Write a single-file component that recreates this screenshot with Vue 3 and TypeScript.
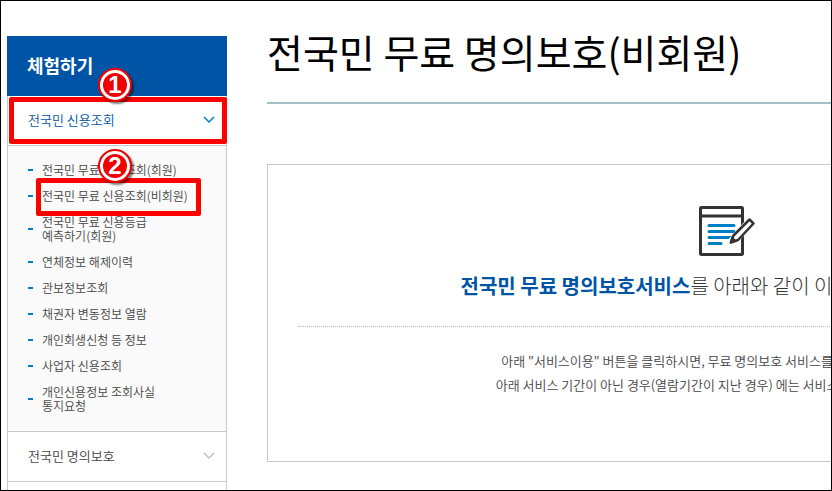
<script setup lang="ts">
interface Marker {
  label: string
  kind: string
}

const links: string[] = [
  '전국민 무료 신용조회(회원)',
  '전국민 무료 신용조회(비회원)',
  '전국민 무료 신용등급\n예측하기(회원)',
  '연체정보 해제이력',
  '관보정보조회',
  '채권자 변동정보 열람',
  '개인회생신청 등 정보',
  '사업자 신용조회',
  '개인신용정보 조회사실\n통지요청',
]

const markers: Marker[] = [
  { label: '1', kind: 'first' },
  { label: '2', kind: 'second' },
]
</script>

<template>
  <div class="frame">
    <div class="page">
      <nav class="side">
        <h2 class="side-title">체험하기</h2>
        <div class="side-body">
          <button class="group active" type="button" aria-expanded="true">
            <span>전국민 신용조회</span>
            <svg class="chevron" viewBox="0 0 12 8"><path d="M1 1L6 6L11 1" /></svg>
          </button>
          <ul class="links">
            <li v-for="link in links" :key="link"><a href="#">{{ link }}</a></li>
          </ul>
          <button class="group" type="button" aria-expanded="false">
            <span>전국민 명의보호</span>
            <svg class="chevron" viewBox="0 0 12 8"><path d="M1 1L6 6L11 1" /></svg>
          </button>
        </div>
        <div class="outline outline-first"></div>
        <div class="outline outline-second"></div>
        <span v-for="m in markers" :key="m.label" class="marker" :class="m.kind">
          <span class="disc">{{ m.label }}</span>
        </span>
      </nav>

      <main class="main">
        <h1>전국민 무료 명의보호(비회원)</h1>
        <section class="panel">
          <svg class="note" viewBox="0 0 58 52">
            <rect class="ink" x="2.500" y="2.500" width="42" height="47" rx="1" />
            <path class="ink" d="M2.500 11H44.500" />
            <path class="lines" d="M11 20.500H36M11 26.500H36M11 32.500H33M11 38.500H23" />
            <path class="halo" d="M34 37L53 16" />
            <path class="pen" d="M51.500 14.500L55.500 18.500L40 35L33 37.500L35.500 30.500Z" />
            <path class="tip" d="M31.500 38.500L33.500 31L39 36Z" />
          </svg>
          <p class="lead"><strong>전국민 무료 명의보호서비스</strong>를 아래와 같이 이용하실 수 있습니다.</p>
          <p class="text">
            아래 "서비스이용" 버튼을 클릭하시면, 무료 명의보호 서비스를 이용하실 수 있습니다.<br />
            아래 서비스 기간이 아닌 경우(열람기간이 지난 경우) 에는 서비스를 이용할 수 없습니다.
          </p>
        </section>
      </main>
    </div>
  </div>
</template>

<style>
body {
  margin: 0;
  background: #fff;
}
</style>

<style scoped>
.frame {
  box-sizing: border-box;
  height: 100vh;
  overflow: hidden;
  border: 1px solid #000;
  font-family: 'Noto Sans CJK KR', sans-serif;
  color: #444;
}

.page {
  display: flex;
  gap: 40px;
  box-sizing: border-box;
  min-width: 1186px;
  min-height: 100%;
  padding-left: 6px;
}

.side {
  position: relative;
  display: flex;
  flex-direction: column;
  flex: 0 0 220px;
  margin-top: 35px;
}

.side-title {
  margin: 0;
  padding-left: 20px;
  background: #0054a6;
  color: #fff;
  font-size: 18px;
  font-weight: 700;
  line-height: 58px;
  padding-bottom: 2px;
}

.side-body {
  flex: 1;
  border: solid #c8c8c8;
  border-width: 0 1px;
}

.group {
  display: flex;
  align-items: center;
  justify-content: space-between;
  box-sizing: border-box;
  width: 100%;
  height: 50px;
  padding: 0 11px 2px 20px;
  border: 0;
  border-bottom: 1px solid #c8c8c8;
  background: #fff;
  color: #444;
  font: 350 13px 'Noto Sans CJK KR', sans-serif;
}

.active {
  color: #0054a6;
}

.chevron {
  width: 12px;
  height: 8px;
  fill: none;
  stroke: #c0c0c0;
  stroke-width: 1.5;
}

.active .chevron {
  stroke: #0080c4;
}

.links {
  display: grid;
  gap: 12px;
  margin: 0;
  padding: 17px 0 18px 20px;
  border-bottom: 1px solid #c8c8c8;
  background: #fafafa;
  list-style: none;
  font-size: 12px;
  font-weight: 350;
  line-height: 14px;
}

.links li {
  display: flex;
  align-items: center;
  gap: 9px;
}

.links li::before {
  content: '';
  width: 5px;
  height: 2px;
  background: #0080c4;
}

.links a {
  color: #444;
  text-decoration: none;
  white-space: pre-line;
}

.outline {
  position: absolute;
  box-sizing: border-box;
  border: 5px solid #f00;
  border-radius: 2px;
  pointer-events: none;
}

.outline-first {
  top: 61px;
  left: 2px;
  right: 0;
  height: 47px;
}

.outline-second {
  top: 142px;
  left: 29px;
  width: 165px;
  height: 38px;
}

.marker {
  position: absolute;
  left: 91px;
  box-sizing: border-box;
  width: 34px;
  height: 34px;
  padding: 3px;
  border: 2px solid #f00000;
  border-radius: 50%;
  background: #fff;
  box-shadow: 2px 2px 2px rgba(0, 0, 0, 0.5);
}

.first {
  top: 32px;
}

.second {
  top: 113px;
}

.disc {
  display: block;
  border-radius: 50%;
  background: #f00000;
  color: #fff;
  font: bold 24px/24px 'Liberation Sans', sans-serif;
  text-align: center;
}

.main {
  flex: 1;
}

h1 {
  margin: 21px 0 0;
  padding-bottom: 22px;
  border-bottom: 2px solid #9fbfc9;
  color: #000;
  font-size: 39px;
  font-weight: 400;
  line-height: 58px;
}

.panel {
  margin-top: 60px;
  padding: 40px 30px 64px;
  border: 1px solid #c8c8c8;
  text-align: center;
}

.note {
  display: block;
  width: 58px;
  height: 52px;
  margin: 0 auto;
}

.ink {
  fill: none;
  stroke: #333;
  stroke-width: 3;
}

.lines {
  fill: none;
  stroke: #0080c4;
  stroke-width: 3;
  stroke-linecap: round;
}

.halo {
  stroke: #fff;
  stroke-width: 9;
}

.pen {
  fill: #fff;
  stroke: #333;
  stroke-width: 2.5;
  stroke-linejoin: round;
}

.tip {
  fill: #333;
}

.lead {
  margin: 0;
  padding: 13px 0 24px;
  border-bottom: 1px dotted #bbb;
  color: #333;
  font-size: 20px;
  font-weight: 300;
  line-height: 32px;
}

.lead strong {
  color: #0054a6;
  font-weight: 700;
}

.text {
  margin: 22px 0 0;
  color: #444;
  font-size: 13px;
  font-weight: 350;
  line-height: 24px;
}
</style>
